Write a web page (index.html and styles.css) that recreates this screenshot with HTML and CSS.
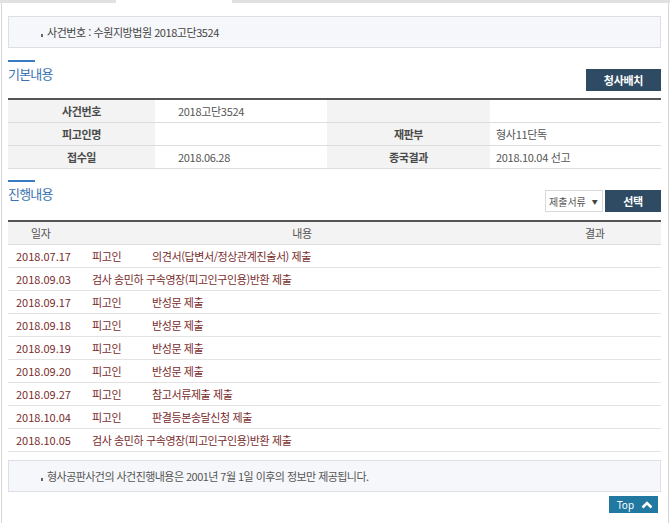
FILE: index.html
```html
<!DOCTYPE html>
<html lang="ko">
<head>
<meta charset="utf-8">
<title>사건검색</title>
<link rel="stylesheet" href="styles.css">
</head>
<body>
<div class="tabs"><span class="tab tab-off tab-a"></span><span class="tab tab-on"></span><span class="tab tab-off tab-b"></span></div>
<div class="frame">
  <div class="infobox"><span class="bullet"></span>사건번호 : 수원지방법원 2018고단3524</div>

  <div class="section-head first">
    <h2 class="title">기본내용</h2>
    <button class="btn btn-wide">청사배치</button>
  </div>
  <table class="basic">
    <colgroup><col class="c1"><col class="c2"><col class="c3"><col class="c4"></colgroup>
    <tr><th>사건번호</th><td>2018고단3524</td><th></th><td class="v2"></td></tr>
    <tr><th>피고인명</th><td></td><th>재판부</th><td class="v2">형사11단독</td></tr>
    <tr><th>접수일</th><td>2018.06.28</td><th>종국결과</th><td class="v2">2018.10.04 선고</td></tr>
  </table>

  <div class="section-head second">
    <h2 class="title">진행내용</h2>
    <div class="controls">
      <div class="select">제출서류<span class="arrow">▼</span></div>
      <button class="btn btn-narrow">선택</button>
    </div>
  </div>
  <table class="progress">
    <colgroup><col class="d1"><col class="d2"><col class="d3"></colgroup>
    <tr class="head"><th>일자</th><th>내용</th><th>결과</th></tr>
    <tr><td>2018.07.17</td><td><span class="who">피고인</span>의견서(답변서/정상관계진술서) 제출</td><td></td></tr>
    <tr><td>2018.09.03</td><td>검사 송민하 구속영장(피고인구인용)반환 제출</td><td></td></tr>
    <tr><td>2018.09.17</td><td><span class="who">피고인</span>반성문 제출</td><td></td></tr>
    <tr><td>2018.09.18</td><td><span class="who">피고인</span>반성문 제출</td><td></td></tr>
    <tr><td>2018.09.19</td><td><span class="who">피고인</span>반성문 제출</td><td></td></tr>
    <tr><td>2018.09.20</td><td><span class="who">피고인</span>반성문 제출</td><td></td></tr>
    <tr><td>2018.09.27</td><td><span class="who">피고인</span>참고서류제출 제출</td><td></td></tr>
    <tr><td>2018.10.04</td><td><span class="who">피고인</span>판결등본송달신청 제출</td><td></td></tr>
    <tr><td>2018.10.05</td><td>검사 송민하 구속영장(피고인구인용)반환 제출</td><td></td></tr>
  </table>

  <div class="infobox notice"><span class="bullet"></span>형사공판사건의 사건진행내용은 2001년 7월 1일 이후의 정보만 제공됩니다.</div>

  <div class="top-row">
    <a class="top-btn" href="#">Top<svg width="12" height="8" viewBox="0 0 12 8"><path d="M1.5 6.5 L6 2 L10.5 6.5" fill="none" stroke="#fff" stroke-width="2.6" stroke-linecap="butt"/></svg></a>
  </div>
</div>
</body>
</html>
```

FILE: styles.css
```css
html, body {
  margin: 0;
  padding: 0;
  background: #fff;
}
body {
  font-family: "Noto Sans CJK KR", "Noto Sans", sans-serif;
  font-size: 11px;
  color: #555;
  width: 670px;
  height: 523px;
  overflow: hidden;
}
.tabs {
  display: flex;
  height: 3px;
}
.tab { display: block; height: 3px; }
.tab-off { background: #e1e1e1; }
.tab-a { width: 116px; }
.tab-on { width: 116px; background: #fff; }
.tab-b { flex: 1; }
.frame {
  margin: 0 1px;
  border-left: 1px solid #d6d6d6;
  border-right: 1px solid #d6d6d6;
  padding: 13px 7px 20px 6px;
  height: 520px;
  box-sizing: border-box;
}
.infobox {
  height: 32px;
  box-sizing: border-box;
  border: 1px solid #dcdfe6;
  background: #f5f7fa;
  display: flex;
  align-items: center;
  padding-left: 31px;
  color: #444;
  font-size: 11px;
  letter-spacing: -0.45px;
}
.bullet {
  display: inline-block;
  width: 2px;
  height: 3px;
  background: #666;
  margin-left: 1px;
  margin-right: 4px;
  margin-top: 6px;
}
.section-head {
  display: flex;
  justify-content: space-between;
}
.section-head.first {
  margin-top: 12px;
  height: 31px;
  margin-bottom: 7px;
}
.section-head.second {
  margin-top: 11px;
  height: 32px;
  margin-bottom: 8px;
}
.title {
  margin: 0;
  font-size: 13px;
  font-weight: normal;
  color: #3a72b3;
  letter-spacing: -0.8px;
  line-height: 16px;
  padding-top: 6px;
  position: relative;
  align-self: flex-start;
}
.title::before {
  content: "";
  position: absolute;
  left: 0;
  top: 0;
  width: 27px;
  height: 2px;
  background: #3a7cc4;
}
.btn {
  border: 0;
  background: #2f4b63;
  color: #fff;
  font-family: inherit;
  font-size: 11px;
  font-weight: bold;
  height: 22px;
  padding: 0;
  letter-spacing: -0.3px;
  align-self: flex-end;
}
.btn-wide { width: 75px; }
.btn-narrow { width: 56px; }
.controls {
  display: flex;
  gap: 2px;
  align-self: flex-end;
}
.select {
  width: 58px;
  height: 22px;
  box-sizing: border-box;
  border: 1px solid #d9d9d9;
  background: #fff;
  display: flex;
  align-items: center;
  padding-left: 3px;
  color: #555;
  font-size: 10px;
  letter-spacing: 0;
}
.arrow {
  font-size: 6px;
  margin-left: 6px;
  color: #444;
}
table {
  border-collapse: collapse;
  table-layout: fixed;
  width: 653px;
}
.basic {
  border-top: 2px solid #555;
}
.basic col.c1 { width: 147px; }
.basic col.c2 { width: 172px; }
.basic col.c3 { width: 163px; }
.basic col.c4 { width: 171px; }
.basic th, .basic td {
  height: 22px;
  padding: 0;
  border-bottom: 1px solid #dedede;
  font-size: 11px;
}
.basic th {
  background: #f3f3f3;
  color: #4a4a4a;
  font-weight: bold;
  text-align: center;
  letter-spacing: -0.4px;
}
.basic td {
  padding-left: 23px;
  color: #555;
  letter-spacing: -0.3px;
}
.basic td.v2 {
  padding-left: 6px;
}
.progress {
  border-top: 2px solid #555;
}
.progress col.d1 { width: 76px; }
.progress col.d2 { width: 436px; }
.progress col.d3 { width: 141px; }
.progress th {
  background: #f3f3f3;
  height: 22px;
  padding: 0;
  border-bottom: 1px solid #dedede;
  font-weight: normal;
  color: #555;
  text-align: center;
  letter-spacing: -0.3px;
}
.progress th:first-child { text-align: left; padding-left: 23px; }
.progress th:last-child { text-align: left; padding-left: 65px; }
.progress td {
  height: 22px;
  padding: 0 0 0 8px;
  border-bottom: 1px solid #e3e3e3;
  color: #7a2c2c;
  white-space: nowrap;
  letter-spacing: -0.4px;
}
.progress td:first-child { letter-spacing: 0; }
.who {
  display: inline-block;
  width: 60px;
}
.notice {
  margin-top: 8px;
  color: #555;
  letter-spacing: -0.55px;
}
.top-row {
  display: flex;
  justify-content: flex-end;
  margin-top: 4px;
  padding-right: 3px;
}
.top-btn {
  display: flex;
  align-items: center;
  justify-content: space-between;
  width: 49px;
  height: 17px;
  box-sizing: border-box;
  padding: 0 5px 0 8px;
  background: #2179a1;
  color: #fff;
  font-size: 10px;
  text-decoration: none;
  font-family: "Noto Sans", sans-serif;
}
```
